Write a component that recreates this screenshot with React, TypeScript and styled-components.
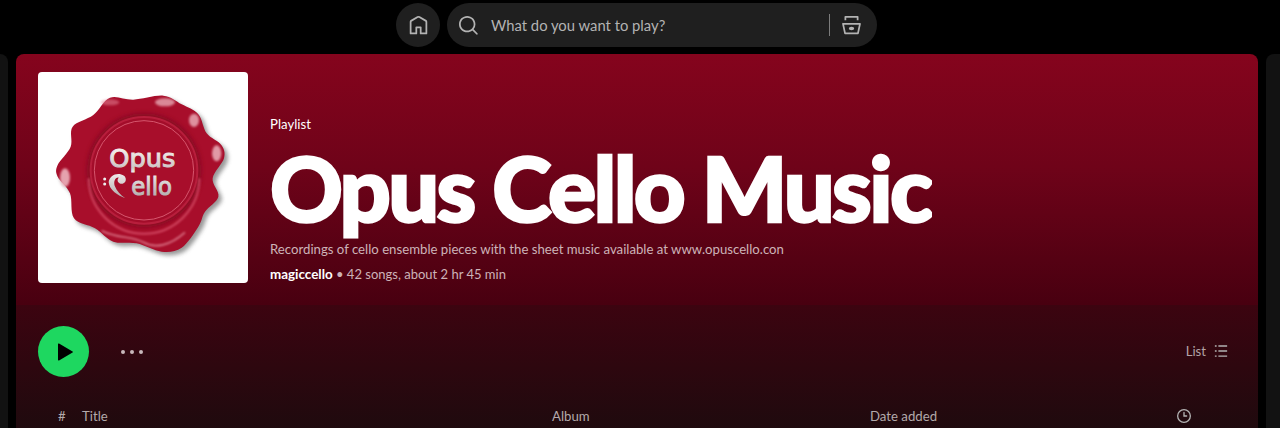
import styled, { createGlobalStyle } from 'styled-components'

// seal outline traced from the cover, in the coordinates of the svg viewBox
const SEAL_POINTS = [
	[240, 98], [310, 104], [400, 92], [455, 118], [505, 148], [530, 205], [574, 240], [582, 280], [548, 340],
	[565, 395], [525, 440], [505, 485], [455, 548], [395, 560], [320, 535], [250, 530], [195, 490], [132, 460],
	[120, 385], [83, 335], [83, 300], [122, 245], [128, 185], [190, 150],
]

const smoothPath = (points: number[][]) => {
	const n = points.length
	let d = `M${points[0][0]} ${points[0][1]}`
	for (let i = 0; i < n; i++) {
		const p0 = points[(i - 1 + n) % n]
		const p1 = points[i]
		const p2 = points[(i + 1) % n]
		const p3 = points[(i + 2) % n]
		const c1x = p1[0] + (p2[0] - p0[0]) / 6
		const c1y = p1[1] + (p2[1] - p0[1]) / 6
		const c2x = p2[0] - (p3[0] - p1[0]) / 6
		const c2y = p2[1] - (p3[1] - p1[1]) / 6
		d += `C${c1x} ${c1y} ${c2x} ${c2y} ${p2[0]} ${p2[1]}`
	}
	return d + 'Z'
}

const SealLogo = () => {
	const outline = smoothPath(SEAL_POINTS)
	return (
		<svg width="210" height="211" viewBox="24 21 630 633" aria-hidden="true">
			<defs>
				<linearGradient id="metal" gradientUnits="userSpaceOnUse" x1="0" y1="250" x2="0" y2="395">
					<stop offset="0%" stopColor="#f6f0ee" />
					<stop offset="40%" stopColor="#cfc6c6" />
					<stop offset="50%" stopColor="#f2eeee" />
					<stop offset="100%" stopColor="#b3adad" />
				</linearGradient>
				<filter id="soft" x="-30%" y="-30%" width="160%" height="160%">
					<feGaussianBlur stdDeviation="7" />
				</filter>
				<filter id="softer" x="-30%" y="-30%" width="160%" height="160%">
					<feGaussianBlur stdDeviation="3" />
				</filter>
			</defs>
			<path d={outline} transform="translate(10 10)" fill="#6d6d6d" opacity="0.7" filter="url(#soft)" />
			<path d={outline} fill="#a80e2b" />
			<circle cx="342" cy="316" r="172" fill="#800720" opacity="0.75" filter="url(#soft)" />
			<path d="M176 340a166 166 0 0 0 332 0" fill="none" stroke="#e05a73" strokeWidth="6" opacity="0.75" filter="url(#softer)" />
			<path d="M215 497c50 25 90 15 125 35s80 10 125-30" fill="none" stroke="#f0a0ae" strokeWidth="5" opacity="0.7" filter="url(#softer)" />
			<circle cx="342" cy="316" r="160" fill="#a30d2a" stroke="#b81e3c" strokeWidth="6" />
			<circle cx="342" cy="316" r="149" fill="#a80e2b" stroke="#d6566d" strokeWidth="3" />
			<ellipse cx="105" cy="338" rx="15" ry="28" fill="#f0bcc5" opacity="0.85" filter="url(#softer)" />
			<ellipse cx="560" cy="265" rx="14" ry="24" fill="#f0bcc5" opacity="0.8" filter="url(#softer)" />
			<ellipse cx="492" cy="166" rx="15" ry="20" fill="#f0bcc5" opacity="0.75" filter="url(#softer)" />
			<ellipse cx="405" cy="112" rx="30" ry="12" fill="#f0bcc5" opacity="0.7" filter="url(#softer)" />
			<ellipse cx="240" cy="112" rx="28" ry="9" fill="#e88a9c" opacity="0.5" filter="url(#softer)" />
			<SealText x="238" y="305" textLength="198" lengthAdjust="spacingAndGlyphs">
				Opus
			</SealText>
			<SealText x="304" y="389" textLength="122" lengthAdjust="spacingAndGlyphs">
				ello
			</SealText>
			<path
				d="M236 352C238 332 262 320 282 332 290 338 290 352 278 356 266 358 258 346 266 338 256 336 250 350 254 362 260 378 272 390 286 400 264 392 238 376 236 352Z"
				fill="url(#metal)"
			/>
			<circle cx="224" cy="342" r="4.5" fill="#eee" />
			<circle cx="224" cy="357" r="4.5" fill="#eee" />
		</svg>
	)
}

export default function App() {
	return (
		<>
			<GlobalStyle />
			<Page>
				<TopBar>
					<HomeButton>
						<svg width="24" height="24" viewBox="0 0 24 24" fill="#b3b3b3" aria-hidden="true">
							<path d="M12.5 3.247a1 1 0 0 0-1 0L4 7.577V20h4.5v-6a1 1 0 0 1 1-1h5a1 1 0 0 1 1 1v6H20V7.577l-7.5-4.33zm-2-1.732a3 3 0 0 1 3 0l7.5 4.33a2 2 0 0 1 1 1.732V21a1 1 0 0 1-1 1h-6.5a1 1 0 0 1-1-1v-6h-3v6a1 1 0 0 1-1 1H3a1 1 0 0 1-1-1V7.577a2 2 0 0 1 1-1.732l7.5-4.33z" />
						</svg>
					</HomeButton>
					<SearchBar>
						<svg width="24" height="24" viewBox="0 0 24 24" fill="#b3b3b3" aria-hidden="true">
							<path d="M10.533 1.279c-5.18 0-9.407 4.14-9.407 9.279s4.226 9.279 9.407 9.279c2.234 0 4.29-.77 5.907-2.058l4.353 4.353a1 1 0 1 0 1.414-1.414l-4.344-4.344a9.157 9.157 0 0 0 2.077-5.816c0-5.14-4.226-9.28-9.407-9.28zm-7.407 9.279c0-4.006 3.302-7.28 7.407-7.28s7.407 3.274 7.407 7.28-3.302 7.279-7.407 7.279-7.407-3.273-7.407-7.28z" />
						</svg>
						<SearchPlaceholder>What do you want to play?</SearchPlaceholder>
						<SearchDivider />
						<svg width="24" height="24" viewBox="0 0 24 24" fill="#b3b3b3" aria-hidden="true">
							<path d="M15 15.5c0 1.105-1.343 2-3 2s-3-.895-3-2 1.343-2 3-2 3 .895 3 2z" />
							<path d="M1.513 9.37A1 1 0 0 1 2.291 9h19.418a1 1 0 0 1 .979 1.208l-2.339 11a1 1 0 0 1-.978.792H4.63a1 1 0 0 1-.978-.792l-2.339-11a1 1 0 0 1 .201-.837zM3.525 11l1.913 9h13.123l1.913-9H3.525zM4 2a1 1 0 0 1 1-1h14a1 1 0 0 1 1 1v4h-2V3H6v3H4V2z" />
						</svg>
					</SearchBar>
				</TopBar>

				<Columns>
					<SidePanel $width={8} />
					<MainPanel>
						<Hero>
							<Cover>
								<SealLogo />
							</Cover>
							<HeroText>
								<Eyebrow>Playlist</Eyebrow>
								<Title>Opus Cello Music</Title>
								<Description>Recordings of cello ensemble pieces with the sheet music available at www.opuscello.con</Description>
								<Meta>
									<Owner>magiccello</Owner> • 42 songs, about 2 hr 45 min
								</Meta>
							</HeroText>
						</Hero>

						<Tracks>
							<Actions>
								<PlayButton>
									<svg width="24" height="24" viewBox="0 0 24 24" fill="#000" aria-hidden="true">
										<path d="M7.05 3.606l13.49 7.788a.7.7 0 0 1 0 1.212L7.05 20.394A.7.7 0 0 1 6 19.788V4.212a.7.7 0 0 1 1.05-.606z" />
									</svg>
								</PlayButton>
								<MoreDots>
									<Dot />
									<Dot />
									<Dot />
								</MoreDots>
								<ViewToggle>
									List
									<svg width="14" height="14" viewBox="0 0 16 16" fill="#b3b3b3" aria-hidden="true">
										<path d="M15 14.5H5V13h10v1.5zm0-5.75H5v-1.5h10v1.5zM15 3H5V1.5h10V3zM3 3H1V1.5h2V3zm0 11.5H1V13h2v1.5zm0-5.75H1v-1.5h2v1.5z" />
									</svg>
								</ViewToggle>
							</Actions>
							<TableHead>
								<span>#</span>
								<span>Title</span>
								<span>Album</span>
								<span>Date added</span>
								<svg width="14" height="14" viewBox="0 0 16 16" fill="#b3b3b3" aria-hidden="true">
									<path d="M8 1.5a6.5 6.5 0 1 0 0 13 6.5 6.5 0 0 0 0-13zM0 8a8 8 0 1 1 16 0A8 8 0 0 1 0 8z" />
									<path d="M8 3.25a.75.75 0 0 1 .75.75v3.25H11a.75.75 0 0 1 0 1.5H7.25V4A.75.75 0 0 1 8 3.25z" />
								</svg>
							</TableHead>
						</Tracks>
					</MainPanel>
					<SidePanel $width={14} />
				</Columns>
			</Page>
		</>
	)
}

const GlobalStyle = createGlobalStyle`
	html,
	body {
		margin: 0;
		background: #000;
		font-family: Lato, 'Noto Sans', sans-serif;
		color: #fff;
	}
`

const Page = styled.div`
	width: 1280px;
	height: 428px;
	overflow: hidden;
	display: flex;
	flex-direction: column;
	background: #000;
`

const TopBar = styled.header`
	height: 54px;
	flex: none;
	box-sizing: border-box;
	padding: 3px 0 0 396px;
	display: flex;
	align-items: flex-start;
	gap: 7px;
`

const HomeButton = styled.div`
	width: 44px;
	height: 44px;
	border-radius: 50%;
	background: #1f1f1f;
	display: flex;
	align-items: center;
	justify-content: center;

	svg {
		width: 21px;
		height: 21px;
	}
`

const SearchBar = styled.div`
	width: 430px;
	height: 44px;
	box-sizing: border-box;
	padding: 0 15px 0 11px;
	border-radius: 22px;
	background: #1f1f1f;
	display: flex;
	align-items: center;

	svg {
		flex: none;
		width: 21px;
		height: 21px;
	}
`

const SearchPlaceholder = styled.span`
	margin-left: 12px;
	flex: 1;
	font-size: 14.8px;
	color: #b3b3b3;
`

const SearchDivider = styled.div`
	width: 1px;
	height: 22px;
	margin-right: 11px;
	background: #7c7c7c;
`

const Columns = styled.div`
	flex: 1;
	min-height: 0;
	display: flex;
	gap: 8px;
`

const SidePanel = styled.aside<{ $width: number }>`
	flex: none;
	width: ${(p) => p.$width}px;
	background: #121212;
	border-radius: ${(p) => (p.$width === 8 ? '0 8px 0 0' : '8px 0 0 0')};
`

const MainPanel = styled.main`
	flex: 1;
	min-width: 0;
	border-radius: 8px 8px 0 0;
	overflow: hidden;
	display: flex;
	flex-direction: column;
`

const Hero = styled.section`
	height: 251px;
	flex: none;
	box-sizing: border-box;
	padding: 18px 22px 22px;
	display: flex;
	gap: 22px;
	background: linear-gradient(180deg, #85041d 0%, #6f0319 45%, #480010 100%);
`

const Cover = styled.div`
	flex: none;
	width: 210px;
	height: 211px;
	border-radius: 4px;
	overflow: hidden;
	background: #fff;
`

const HeroText = styled.div`
	min-width: 0;
	display: flex;
	flex-direction: column;
	justify-content: flex-end;
	padding-bottom: 1px;
`

const Eyebrow = styled.div`
	font-size: 13.2px;
	line-height: 16px;
	color: #fff;
`

const Title = styled.h1`
	margin: 1px 0 0;
	width: 662px;
	overflow: hidden;
	white-space: nowrap;
	font-size: 90px;
	line-height: 108px;
	font-weight: 900;
	letter-spacing: -0.03em;
	-webkit-text-stroke: 2.5px #fff;
	color: #fff;
`

const Description = styled.p`
	margin: 0;
	font-size: 13.2px;
	line-height: 16px;
	color: #cdb3b8;
`

const Meta = styled.div`
	margin-top: 9px;
	font-size: 13px;
	line-height: 16px;
	color: #cdb3b8;
`

const Owner = styled.span`
	font-size: 13.4px;
	font-weight: 700;
	color: #fff;
`

const Tracks = styled.section`
	flex: 1;
	background: linear-gradient(180deg, #3c0410 0%, #1f0a0e 100%);
`

const Actions = styled.div`
	height: 103px;
	box-sizing: border-box;
	padding: 21px 30px 0 22px;
	display: flex;
	align-items: flex-start;
`

const PlayButton = styled.div`
	width: 51px;
	height: 51px;
	border-radius: 50%;
	background: #1ed760;
	display: flex;
	align-items: center;
	justify-content: center;
`

const MoreDots = styled.div`
	margin: 24px 0 0 32px;
	display: flex;
	gap: 5px;
`

const Dot = styled.span`
	width: 4px;
	height: 4px;
	border-radius: 50%;
	background: #c8b8bb;
`

const ViewToggle = styled.div`
	margin: 17px 0 0 auto;
	display: flex;
	align-items: center;
	gap: 8px;
	font-size: 13.2px;
	line-height: 16px;
	color: #b3a3a6;
`

const TableHead = styled.div`
	padding-left: 42px;
	display: grid;
	grid-template-columns: 24px 470px 318px 307px 14px;
	align-items: center;
	font-size: 13.2px;
	line-height: 16px;
	color: #b3a9ab;
`

const SealText = styled.text`
	font-family: 'DejaVu Sans', sans-serif;
	font-size: 74px;
	fill: url(#metal);
	stroke: url(#metal);
	stroke-width: 3;
`
